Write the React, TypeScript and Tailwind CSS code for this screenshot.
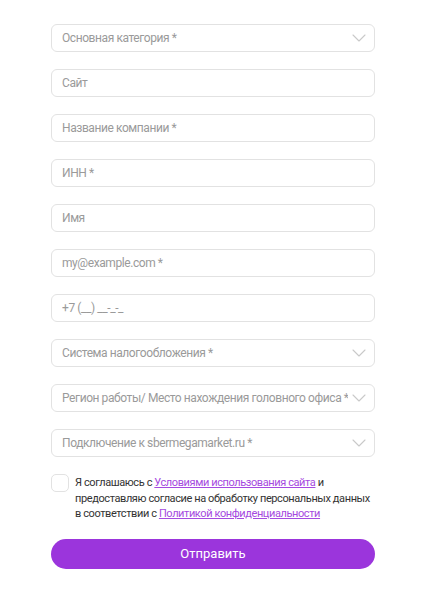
const fields: { label: string; select?: boolean }[] = [
  { label: "Основная категория *", select: true },
  { label: "Сайт" },
  { label: "Название компании *" },
  { label: "ИНН *" },
  { label: "Имя" },
  { label: "my@example.com *" },
  { label: "+7 (__) __-_-_" },
  { label: "Система налогообложения *", select: true },
  { label: "Регион работы/ Место нахождения головного офиса *", select: true },
  { label: "Подключение к sbermegamarket.ru *", select: true },
];

function Chevron() {
  return (
    <svg width="14" height="8" viewBox="0 0 14 8" fill="none" className="shrink-0">
      <path d="M1 1l6 6 6-6" stroke="#c9c9c9" strokeWidth="1.1" strokeLinecap="round" strokeLinejoin="round" />
    </svg>
  );
}

export default function App() {
  return (
    <div
      className="min-h-screen bg-white pl-[51px] pt-[24px]"
      style={{ fontFamily: 'Roboto, "Noto Sans", sans-serif' }}
    >
      <form className="w-[324px] flex flex-col gap-[17px]" onSubmit={(e) => e.preventDefault()}>
        {fields.map((f) => (
          <div
            key={f.label}
            className="h-[28px] border border-[#e2e2e2] rounded-[6px] flex items-center gap-[4px] pl-[10px] pr-[8px] bg-white"
          >
            <span className="flex-1 text-[12px] tracking-[-0.42px] text-[#9a9a9a] whitespace-nowrap overflow-hidden">
              {f.label}
            </span>
            {f.select && <Chevron />}
          </div>
        ))}

        <div className="flex gap-[6px]">
          <div className="w-[18px] h-[18px] shrink-0 border border-[#e2e2e2] rounded-[5px] bg-white" />
          <p className="text-[11px] leading-[15.5px] tracking-[-0.4px] text-[#333333] pt-[1px]">
            Я соглашаюсь с{" "}
            <a href="#" className="text-[#a54ae0] underline">
              Условиями использования сайта
            </a>{" "}
            и предоставляю согласие на обработку персональных данных в соответствии с{" "}
            <a href="#" className="text-[#a54ae0] underline">
              Политикой конфиденциальности
            </a>
          </p>
        </div>

        <button
          type="submit"
          className="h-[30px] w-full rounded-full bg-[#9b35dc] text-white text-[13px]"
        >
          Отправить
        </button>
      </form>
    </div>
  );
}
